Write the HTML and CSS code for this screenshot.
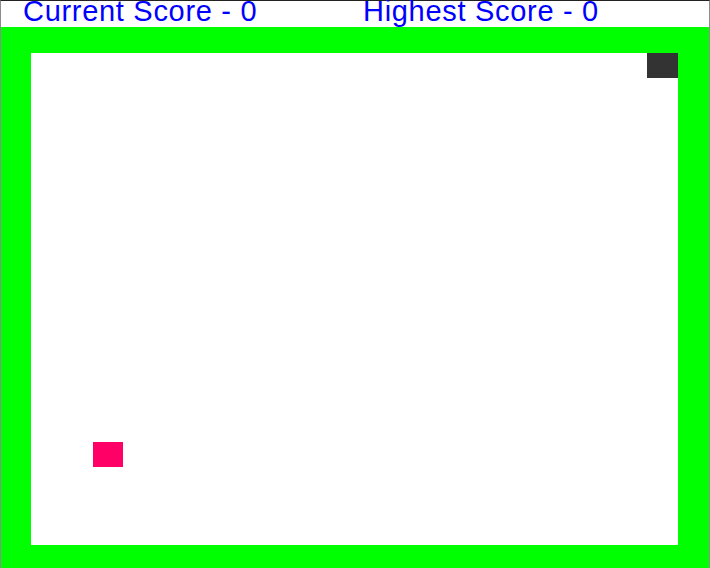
FILE: index.html
```html
<!DOCTYPE html>
<html>
<head>
<meta charset="utf-8">
<link rel="stylesheet" href="styles.css">
</head>
<body>
<div class="frame">
  <header class="scores">
    <span class="score current">Current Score - 0</span>
    <span class="score highest">Highest Score - 0</span>
  </header>
  <main class="board">
    <div class="field">
      <div class="snake-cell"></div>
      <div class="food" style="left:62px; top:389px;"></div>
    </div>
  </main>
</div>
</body>
</html>
```
FILE: styles.css
```css
html, body {
  margin: 0;
  padding: 0;
  background: #fff;
  overflow: hidden;
}
.frame {
  width: 708px;
  height: 567px;
  border-top: 1px solid #222;
  border-left: 1px solid rgba(0,0,0,0.45);
  border-right: 1px solid rgba(0,0,0,0.45);
  display: flex;
  flex-direction: column;
}
.scores {
  height: 26px;
  display: flex;
  align-items: flex-start;
  padding-left: 22px;
  font-family: "Liberation Sans", Arial, sans-serif;
  font-size: 29px;
  letter-spacing: 0.7px;
  line-height: 20px;
  color: #0000ff;
}
.score.current {
  width: 340px;
}
.board {
  flex: 1;
  background: #00ff00;
  padding: 26px 31px 23px 30px;
  display: flex;
}
.field {
  position: relative;
  flex: 1;
  background: #fff;
}
.snake-cell {
  position: absolute;
  right: 0;
  top: 0;
  width: 31px;
  height: 25px;
  background: #333;
}
.food {
  position: absolute;
  width: 30px;
  height: 25px;
  background: #ff0066;
}
```
